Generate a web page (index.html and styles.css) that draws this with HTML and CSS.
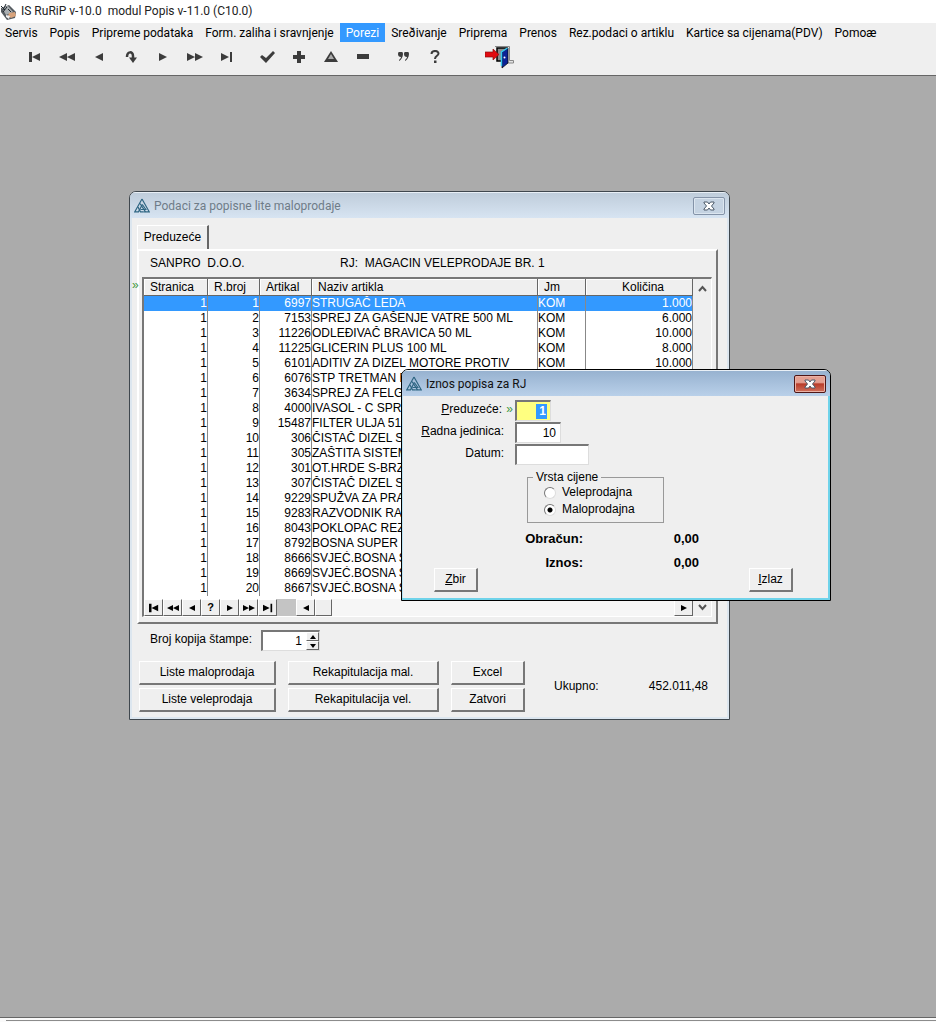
FILE: index.html
```html
<!DOCTYPE html>
<html lang="bs">
<head>
<meta charset="utf-8">
<title>IS RuRiP v-10.0 modul Popis v-11.0 (C10.0)</title>
<link rel="stylesheet" href="styles.css">
</head>
<body>
<svg class="defs" aria-hidden="true">
  <symbol id="logo" viewBox="0 0 16 15"><g fill="none" stroke="#2f6683" stroke-width="1.2"><path d="M8 1L15.200 13.800H9.500"/><path d="M8 1L.800 13.800H4.500L8.300 6.500"/><path d="M8.300 6.500L11.800 11.500H6.500"/><path d="M6 5.500L11.500 13.800"/><path d="M4 9L6.500 13.800H9.500"/></g></symbol>
  <symbol id="first" viewBox="0 0 12 10"><path d="M0 0h3v10H0zM11 1v8L3 5z"/></symbol>
  <symbol id="rew" viewBox="0 0 16 10"><path d="M8 1v8L0 5zM16 1v8L8 5z"/></symbol>
  <symbol id="prev" viewBox="0 0 8 10"><path d="M8 1v8L0 5z"/></symbol>
  <symbol id="next" viewBox="0 0 8 10"><path d="M0 1v8l8-4z"/></symbol>
  <symbol id="fwd" viewBox="0 0 16 10"><path d="M0 1v8l8-4zM8 1v8l8-4z"/></symbol>
  <symbol id="last" viewBox="0 0 12 10"><path d="M9 0h2v10H9zM0 1v8l8-4z"/></symbol>
  <symbol id="cross" viewBox="0 0 12 10"><path d="M1 1h3.500L6 3l1.500-2H11v1L8.500 5 11 8v1H7.500L6 7 4.500 9H1V8l2.500-3L1 2z" fill="#fff" stroke="#4b5968"/></symbol>
</svg>
<div class="app">
  <header class="titlebar">
    <svg class="app-icon" viewBox="0 0 17 17"><path d="M1 5L9 2l7 7-1 6-8 2L1 9z" fill="#555b60"/><path d="M2 5l6-2 5 6-7 3z" fill="#a9aeb1"/><path d="M1 3l4 4M6 1L3 7M3 9l4-5M8 6l3 3" stroke="#1e252b" stroke-width="1"/><path d="M9 10l6-1 1 4-5 2-3-2z" fill="#d8a37c"/><path d="M6 12l4 1-1 3-3-2z" fill="#eee"/></svg>
    <span class="app-title">IS RuRiP v-10.0&nbsp; modul Popis v-11.0 (C10.0)</span>
  </header>
  <nav class="menubar">
    <button>Servis</button><button>Popis</button><button>Pripreme podataka</button><button>Form. zaliha i sravnjenje</button><button class="active">Porezi</button><button>Sreðivanje</button><button>Priprema</button><button>Prenos</button><button>Rez.podaci o artiklu</button><button>Kartice sa cijenama(PDV)</button><button>Pomoæ</button>
  </nav>
  <div class="toolbar">
    <div class="group">
      <button aria-label="Prvi"><svg width="12" height="10"><use href="#first"/></svg></button>
      <button aria-label="Stranica nazad"><svg width="16" height="10"><use href="#rew"/></svg></button>
      <button aria-label="Prethodni"><svg width="8" height="10"><use href="#prev"/></svg></button>
      <button aria-label="Osvježi"><svg width="12" height="12" viewBox="0 0 12 12"><path d="M2 6C2 0 8 0 8 5V8" fill="none" stroke="#3c3c3c" stroke-width="2.500"/><path d="M4 6.500h8L8 12z"/></svg></button>
      <button aria-label="Sljedeći"><svg width="8" height="10"><use href="#next"/></svg></button>
      <button aria-label="Stranica naprijed"><svg width="16" height="10"><use href="#fwd"/></svg></button>
      <button aria-label="Zadnji"><svg width="12" height="10"><use href="#last"/></svg></button>
    </div>
    <div class="group">
      <button aria-label="Potvrdi"><svg width="15" height="12" viewBox="0 0 15 12"><path d="M0 6l2-2 4 3 7-7 2 2-9 10z"/></svg></button>
      <button aria-label="Dodaj"><svg width="12" height="12" viewBox="0 0 12 12"><path d="M4 0h4v4h4v4H8v4H4V8H0V4h4z"/></svg></button>
      <button aria-label="Izmijeni"><svg width="14" height="11" viewBox="0 0 14 11"><path d="M7 0l7 11H0z"/><path d="M7 3l3 5H4z" fill="#aaa"/></svg></button>
      <button aria-label="Obriši"><svg width="12" height="5" viewBox="0 0 12 5"><path d="M0 0h12v5H0z"/></svg></button>
    </div>
    <div class="group">
      <button aria-label="Ponovi"><svg width="11" height="9" viewBox="0 0 11 9"><path d="M0 2a2 2 0 0 1 5 0C5 5 3 8 1 9V8c1-1 2-2 2-3C1 5 0 4 0 2zM6 2a2 2 0 0 1 5 0c0 3-2 6-4 7V8c1-1 2-2 2-3C7 5 6 4 6 2z"/></svg></button>
      <button aria-label="Pomoć"><svg width="10" height="13" viewBox="0 0 10 13"><path d="M1.500 4C1.500 0 8.500 0 8.500 3.500C8.500 6 5 5.500 5 9" fill="none" stroke="#3c3c3c" stroke-width="2"/><path d="M4 10.500h2.500V13H4z"/></svg></button>
    </div>
    <button class="exit" aria-label="Izlaz iz programa"><svg width="29" height="24" viewBox="0 0 29 24"><path d="M10 1.500h14.500v14h4v2.500h-7" fill="#e4e4e4" stroke="#888"/><path d="M12 3h10v13H12z" fill="#8b8b8b" stroke="#000" stroke-width="1.500"/><path d="M17 7l6-4v15l-6 5z" fill="#0c2296" stroke="#000" stroke-width=".7"/><path d="M16.500 21V7l6-4" fill="none" stroke="#35c8f0" stroke-width="1.500"/><circle cx="19.500" cy="12.500" r="1" fill="#fff"/><path d="M0 7h8V4l6 5.500L8 15v-3H0z" fill="#e10b10" stroke="#8b1010" stroke-width=".7"/></svg></button>
  </div>

  <main class="desktop">
    <section class="window main-window">
      <div class="caption"><svg class="logo" width="16" height="15"><use href="#logo"/></svg><h2>Podaci za popisne lite maloprodaje</h2><button class="close" aria-label="Zatvori prozor"><svg width="12" height="10"><use href="#cross"/></svg></button></div>
      <div class="main-body">
        <button class="tab">Preduzeće</button>
        <div class="panel">
          <div class="info"><span>SANPRO&nbsp; D.O.O.</span><span>RJ:&nbsp; MAGACIN VELEPRODAJE BR. 1</span></div>
          <span class="mark row-mark">»</span>
          <div class="listbox">
            <div class="list-main">
              <table>
                <colgroup><col class="c1"><col class="c2"><col class="c2"><col><col class="c5"><col class="c6"></colgroup>
                <thead><tr><th>Stranica</th><th>R.broj</th><th>Artikal</th><th>Naziv artikla</th><th>Jm</th><th class="mid">Količina</th></tr></thead>
                <tbody>
                <tr class="sel"><td>1</td><td>1</td><td>6997</td><td>STRUGAČ LEDA</td><td>KOM</td><td>1.000</td></tr>
                <tr><td>1</td><td>2</td><td>7153</td><td>SPREJ ZA GAŠENJE VATRE 500 ML</td><td>KOM</td><td>6.000</td></tr>
                <tr><td>1</td><td>3</td><td>11226</td><td>ODLEĐIVAČ BRAVICA 50 ML</td><td>KOM</td><td>10.000</td></tr>
                <tr><td>1</td><td>4</td><td>11225</td><td>GLICERIN PLUS 100 ML</td><td>KOM</td><td>8.000</td></tr>
                <tr><td>1</td><td>5</td><td>6101</td><td>ADITIV ZA DIZEL MOTORE PROTIV</td><td>KOM</td><td>10.000</td></tr>
                <tr><td>1</td><td>6</td><td>6076</td><td>STP TRETMAN B</td><td></td><td></td></tr>
                <tr><td>1</td><td>7</td><td>3634</td><td>SPREJ ZA FELG</td><td></td><td></td></tr>
                <tr><td>1</td><td>8</td><td>4000</td><td>IVASOL - C SPR</td><td></td><td></td></tr>
                <tr><td>1</td><td>9</td><td>15487</td><td>FILTER ULJA 51</td><td></td><td></td></tr>
                <tr><td>1</td><td>10</td><td>306</td><td>ČISTAČ DIZEL S</td><td></td><td></td></tr>
                <tr><td>1</td><td>11</td><td>305</td><td>ZAŠTITA SISTEM</td><td></td><td></td></tr>
                <tr><td>1</td><td>12</td><td>301</td><td>OT.HRDE S-BRZ</td><td></td><td></td></tr>
                <tr><td>1</td><td>13</td><td>307</td><td>ČISTAČ DIZEL S</td><td></td><td></td></tr>
                <tr><td>1</td><td>14</td><td>9229</td><td>SPUŽVA ZA PRA</td><td></td><td></td></tr>
                <tr><td>1</td><td>15</td><td>9283</td><td>RAZVODNIK RAS</td><td></td><td></td></tr>
                <tr><td>1</td><td>16</td><td>8043</td><td>POKLOPAC REZ</td><td></td><td></td></tr>
                <tr><td>1</td><td>17</td><td>8792</td><td>BOSNA SUPER</td><td></td><td></td></tr>
                <tr><td>1</td><td>18</td><td>8666</td><td>SVJEĆ.BOSNA S</td><td></td><td></td></tr>
                <tr><td>1</td><td>19</td><td>8669</td><td>SVJEĆ.BOSNA S</td><td></td><td></td></tr>
                <tr><td>1</td><td>20</td><td>8667</td><td>SVJEĆ.BOSNA S</td><td></td><td></td></tr>
                </tbody>
              </table>
              <div class="pager">
                <button aria-label="Početak"><svg width="10" height="10"><use href="#first"/></svg></button><button aria-label="Strana gore"><svg width="12" height="10"><use href="#rew"/></svg></button><button aria-label="Gore"><svg width="6" height="10"><use href="#prev"/></svg></button><button class="ask">?</button><button aria-label="Dole"><svg width="6" height="10"><use href="#next"/></svg></button><button aria-label="Strana dole"><svg width="12" height="10"><use href="#fwd"/></svg></button><button aria-label="Kraj"><svg width="10" height="10"><use href="#last"/></svg></button>
                <span class="filler"></span>
                <button aria-label="Lijevo"><svg width="6" height="10"><use href="#prev"/></svg></button>
                <span class="track"><span class="thumb"></span></span>
                <button aria-label="Desno"><svg width="6" height="10"><use href="#next"/></svg></button>
              </div>
            </div>
            <div class="vscroll">
              <button aria-label="Pomjeri gore"><svg width="9" height="7" viewBox="0 0 9 7"><path d="M1 6l3.500-4L8 6" fill="none" stroke="#555" stroke-width="2"/></svg></button>
              <button aria-label="Pomjeri dole"><svg width="9" height="7" viewBox="0 0 9 7"><path d="M1 1l3.500 4L8 1" fill="none" stroke="#555" stroke-width="2"/></svg></button>
            </div>
          </div>
        </div>
        <div class="copies">
          <label for="copies">Broj kopija štampe:</label>
          <div class="spinner"><input id="copies" value="1"><div class="spin"><button aria-label="Više"><svg width="6" height="4" viewBox="0 0 6 4"><path d="M0 4l3-4 3 4z"/></svg></button><button aria-label="Manje"><svg width="6" height="4" viewBox="0 0 6 4"><path d="M0 0l3 4 3-4z"/></svg></button></div></div>
        </div>
        <div class="footer">
          <div class="actions"><button class="btn">Liste maloprodaja</button><button class="btn">Rekapitulacija mal.</button><button class="btn">Excel</button><button class="btn">Liste veleprodaja</button><button class="btn">Rekapitulacija vel.</button><button class="btn">Zatvori</button></div>
          <div class="total"><span>Ukupno:</span><span>452.011,48</span></div>
        </div>
      </div>
    </section>

    <section class="window dialog">
      <div class="caption"><svg class="logo" width="16" height="15"><use href="#logo"/></svg><h2>Iznos popisa za RJ</h2><button class="close" aria-label="Zatvori dijalog"><svg width="12" height="10"><use href="#cross"/></svg></button></div>
      <form class="dialog-body">
        <div class="fields">
          <label for="firm"><u>P</u>reduzeće:</label><span class="mark">»</span><input id="firm" class="firm" value="1">
          <label class="wide" for="unit"><u>R</u>adna jedinica:</label><input id="unit" class="unit" value="10">
          <label class="wide" for="date">Datum:</label><input id="date" class="date">
        </div>
        <fieldset>
          <legend>Vrsta cijene</legend>
          <label><input type="radio" name="price">Veleprodajna</label>
          <label><input type="radio" name="price" checked>Maloprodajna</label>
        </fieldset>
        <div class="sums"><span>Obračun:</span><span>0,00</span><span>Iznos:</span><span>0,00</span></div>
        <div class="dialog-actions"><button type="button" class="btn"><u>Z</u>bir</button><button type="button" class="btn"><u>I</u>zlaz</button></div>
      </form>
    </section>
  </main>
  <footer class="status"><div></div></footer>
</div>
</body>
</html>
```
FILE: styles.css
```css
* { box-sizing: border-box; }
body { margin: 0; font: 12px/15px "Liberation Sans", Arial, sans-serif; color: #000; background: #efefef; }
button, input { font: inherit; color: inherit; margin: 0; }
button { border: 0; background: none; padding: 0; }
svg { display: block; flex: none; fill: #3c3c3c; }
.defs { position: absolute; width: 0; height: 0; }
.app { min-height: 100vh; display: flex; flex-direction: column; }

.titlebar { height: 23px; background: #fff; display: flex; align-items: center; gap: 4px; font-family: Roboto, "Noto Sans", sans-serif; color: #222; }
.app-icon { width: 17px; height: 17px; }
.menubar { height: 19px; display: flex; font-family: Roboto, "Noto Sans", sans-serif; overflow: hidden; white-space: nowrap; }
.menubar button { padding: 2px 6px 0; flex: none; }
.menubar button:first-child { padding-left: 5px; }
.menubar .active { background: #3399ff; color: #fff; }
.toolbar { height: 34px; padding: 0 19px 4px; display: flex; align-items: center; gap: 8px; border-bottom: 1px solid #666; }
.group { display: flex; }
.group button { width: 32px; height: 24px; display: flex; align-items: center; justify-content: center; }
.exit { margin-left: 26px; }

.desktop { flex: 1; position: relative; background: #ababab; overflow: hidden; }
.status { height: 5px; border-top: 1px solid #666; background: #fafafa; padding: 2px 0 0 6px; }
.status div { border-top: 1px solid #8c8c8c; }

.window { position: absolute; background: #efefef; border: 1px solid #3f474e; border-radius: 7px 7px 0 0; overflow: hidden; }
.main-window { left: 129px; top: 115px; width: 601px; box-shadow: inset 0 0 0 2px #dce6ef; }
.dialog { left: 401px; top: 293px; width: 430px; border-color: #000; box-shadow: inset -2px -2px 0 #6fd3ea, inset 1px 0 0 #b9e3f4; }
.caption { height: 26px; display: flex; align-items: center; gap: 4px; padding: 0 4px; background: linear-gradient(#bfcddb, #d7e4f2); border-top: 1px solid #e8eff6; }
.caption h2 { margin: 0; font: 12px/16px Roboto, "Noto Sans", sans-serif; color: #6f7c88; }
.close { margin-left: auto; width: 32px; height: 18px; border: 1px solid #8493a8; border-radius: 2px; background: #c5d3e2; box-shadow: inset 0 0 0 1px #dce6f0; display: flex; align-items: center; justify-content: center; }
.dialog .caption { background: linear-gradient(#97b2d0, #b9d0e9); }
.dialog .caption h2 { color: #111; }
.dialog .close { border-color: #4e1616; background: linear-gradient(#e4a092 0 40%, #b93c2a 50%, #d0705c); box-shadow: inset 0 0 0 1px #eab2a6; }

.main-body { padding: 7px 11px 7px 7px; }
.tab { display: block; position: relative; width: 72px; height: 24px; border: solid; border-width: 1px 2px 0 1px; border-color: #fff #666 #fff #fff; }
.panel { position: relative; padding: 5px 4px 5px 3px; border: solid; border-width: 2px 2px 2px 2px; border-color: #fff #777 #777 #fff; }
.info { display: flex; height: 21px; padding-left: 8px; }
.info span:first-child { width: 190px; }
.mark { color: #3f9a3f; font-size: 12px; }
.row-mark { position: absolute; left: -7px; top: 27px; }
.listbox { display: flex; border: solid; border-width: 2px 1px 1px 2px; border-color: #777 #fff #fff #777; }
.list-main { flex: 1; background: #fff; }
table { width: 100%; table-layout: fixed; border-collapse: separate; border-spacing: 0; }
.c1 { width: 64px; } .c2 { width: 52px; } .c5 { width: 48px; } .c6 { width: 107px; }
th { height: 17px; padding: 0 6px; text-align: left; font-weight: normal; background: #efefef; border-right: 1px solid #666; border-bottom: 1px solid #666; box-shadow: inset 1px 1px #fff; }
th.mid { text-align: center; padding-left: 14px; }
td { height: 15px; padding: 0; text-align: right; border-right: 1px solid #888; white-space: nowrap; overflow: hidden; line-height: 15px; }
td:nth-child(4), td:nth-child(5) { text-align: left; }
.sel td { background: #3399ff; color: #fff; }
.pager { margin-top: 3px; height: 17px; display: flex; }
.pager button, .thumb, .spin button { border: 1px solid; border-color: #fff #666 #666 #fff; background: #efefef; display: flex; align-items: center; justify-content: center; }
.pager button { width: 19px; flex: none; }
.pager svg, .spin svg { fill: #000; }
.pager .ask { font-size: 11px; font-weight: bold; }
.filler { width: 19px; background: #c4c4c4; }
.track { flex: 1; background: #f6f6f6; display: flex; }
.thumb { width: 17px; }
.vscroll { width: 18px; display: flex; flex-direction: column; justify-content: space-between; }
.vscroll button { height: 18px; display: flex; align-items: center; justify-content: center; }

.copies { display: flex; gap: 9px; padding: 6px 0 0 13px; }
.copies label { line-height: 18px; }
.spinner { width: 59px; height: 21px; display: flex; background: #fff; border: solid; border-width: 2px 1px 1px 2px; border-color: #777 #ddd #ddd #777; }
.spinner input { flex: 1; min-width: 0; border: 0; background: none; text-align: right; padding: 0 4px; }
.spin { width: 13px; display: grid; grid-template-rows: 1fr 1fr; }
.footer { display: flex; align-items: center; padding: 10px 10px 0 2px; }
.actions { display: grid; grid-template-columns: 137px 151px 74px; gap: 3px 12px; }
.btn { height: 24px; background: #efefef; border: solid; border-width: 1px 2px 2px 1px; border-color: #fff #777 #777 #fff; }
.total { flex: 1; display: flex; justify-content: space-between; padding-left: 29px; }

.dialog-body { padding: 4px 37px 8px 32px; }
.fields { display: grid; grid-template-columns: 68px 13px 1fr; row-gap: 1px; justify-items: end; line-height: 18px; }
.fields .wide { grid-column: span 2; padding-right: 11px; }
.fields label { white-space: nowrap; }
.fields .mark { padding-right: 2px; }
.fields input { justify-self: start; height: 21px; padding: 0 4px; text-align: right; border: solid; border-width: 2px 1px 1px 2px; border-color: #777 #ddd #ddd #777; background: #fff; }
.fields .firm { width: 36px; color: #fff; font-weight: bold; background: linear-gradient(#3399ff, #3399ff) right 3px center / 11px 15px no-repeat, #ffff80; }
.fields .unit { width: 46px; }
.fields .date { width: 74px; }
fieldset { width: 137px; margin: 5px 0 0 93px; padding: 0 0 4px 16px; border: 1px solid #999; }
legend { margin-left: -11px; padding: 0 3px; }
fieldset label { display: flex; align-items: center; gap: 6px; height: 17px; }
fieldset legend + label { margin-top: -1px; }
fieldset input { appearance: none; width: 12px; height: 12px; border: 1px solid; border-color: #777 #ddd #ddd #777; border-radius: 50%; background: #fff; }
fieldset input:checked { background: radial-gradient(circle, #000 0 2px, #fff 3px); }
.sums { display: grid; grid-template-columns: 149px 116px; row-gap: 9px; text-align: right; font-size: 13px; font-weight: bold; margin-top: 8px; }
.dialog-actions { display: flex; justify-content: space-between; margin-top: -2px; }
.dialog-actions .btn { width: 44px; }
```
